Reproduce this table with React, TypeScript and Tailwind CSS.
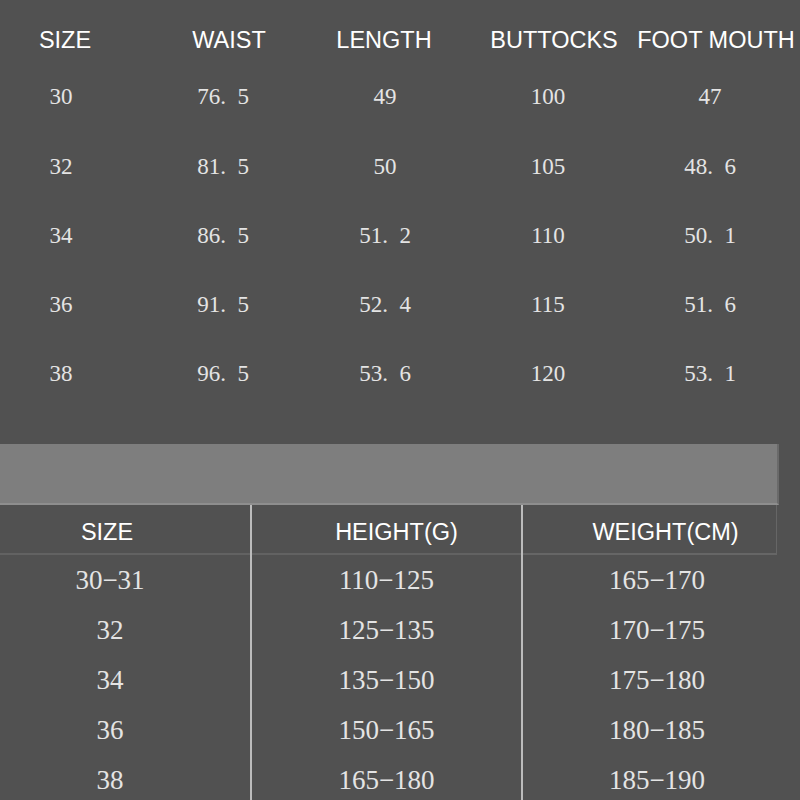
import React from "react";

const sans = { fontFamily: '"Liberation Sans", Arial, sans-serif' };
const serif = { fontFamily: '"Liberation Serif", "Times New Roman", serif' };

const topHeaders = ["SIZE", "WAIST", "LENGTH", "BUTTOCKS", "FOOT MOUTH"];
const topRows = [
  ["30", "76.\u20025", "49", "100", "47"],
  ["32", "81.\u20025", "50", "105", "48.\u20026"],
  ["34", "86.\u20025", "51.\u20022", "110", "50.\u20021"],
  ["36", "91.\u20025", "52.\u20024", "115", "51.\u20026"],
  ["38", "96.\u20025", "53.\u20026", "120", "53.\u20021"],
];
const numPad = ["pr-[8px]", "pr-[12px]", "pl-[2px]", "pr-[12px]", "pr-[12px]"];

const D = "\u2212";

const bottomCols = [
  {
    head: "SIZE",
    vals: ["30" + D + "31", "32", "34", "36", "38"],
    w: "w-[250px]",
    hp: "pr-[36px]",
    dp: "pr-[30px]",
    extra: "",
  },
  {
    head: "HEIGHT(G)",
    vals: ["110" + D + "125", "125" + D + "135", "135" + D + "150", "150" + D + "165", "165" + D + "180"],
    w: "w-[271px] border-l-2 border-[#bcbcbc]",
    hp: "pl-[20px]",
    dp: "",
    extra: "",
  },
  {
    head: "WEIGHT(CM)",
    vals: ["165" + D + "170", "170" + D + "175", "175" + D + "180", "180" + D + "185", "185" + D + "190"],
    w: "w-[256px] border-l-2 border-[#bcbcbc]",
    hp: "pl-[32px]",
    dp: "pl-[14px]",
    extra: "border-r border-[#666666]",
  },
];

export default function App() {
  return (
    <div className="w-[800px] h-[800px] overflow-hidden bg-[#515151] flex flex-col">
      <div className="h-[444px] pt-[19px] shrink-0">
        <div className="grid grid-cols-[130px_198px_112px_228px_96px] grid-rows-[44px_repeat(5,69.25px)]">
          {topHeaders.map((h) => (
            <div
              key={h}
              style={sans}
              className="flex items-center justify-center whitespace-nowrap text-[23.5px] text-white"
            >
              {h}
            </div>
          ))}
          {topRows.map((row, ri) =>
            row.map((v, ci) => (
              <div
                key={ri + "-" + ci}
                style={serif}
                className={
                  "flex items-center justify-center whitespace-pre text-[23px] text-[#e4e4e4] " +
                  numPad[ci]
                }
              >
                {v}
              </div>
            ))
          )}
        </div>
      </div>
      <div className="h-[61px] w-[779px] bg-[#7e7e7e] border-b-2 border-r-2 border-[#8e8e8e] border-r-[#6a6a6a] shrink-0" />
      <div className="flex shrink-0">
        {bottomCols.map((c) => (
          <div key={c.head} className={"flex flex-col shrink-0 " + c.w}>
            <div
              style={sans}
              className={
                "h-[50px] pt-[8px] flex items-center justify-center whitespace-nowrap text-[23.5px] text-white border-b-2 border-[#626262] " +
                c.hp +
                " " +
                c.extra
              }
            >
              {c.head}
            </div>
            {c.vals.map((v) => (
              <div
                key={v}
                style={serif}
                className={
                  "h-[50px] flex items-center justify-center whitespace-nowrap text-[27px] text-[#e4e4e4] " +
                  c.dp
                }
              >
                {v}
              </div>
            ))}
          </div>
        ))}
      </div>
    </div>
  );
}
